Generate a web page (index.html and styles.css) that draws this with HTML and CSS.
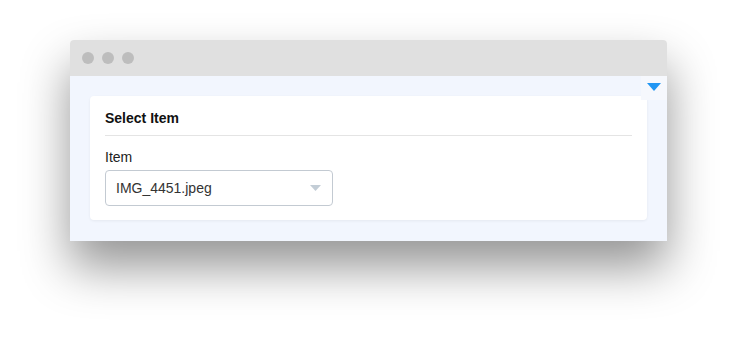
FILE: index.html
```html
<!DOCTYPE html>
<html lang="en">

<head>
  <meta charset="UTF-8">
  <meta name="viewport" content="width=device-width, initial-scale=1.0">
  <title>Select Item</title>
  <link rel="stylesheet" href="styles.css">
</head>

<body>
  <div class="browser">
    <div class="browser__bar">
      <span class="browser__dot"></span>
      <span class="browser__dot"></span>
      <span class="browser__dot"></span>
    </div>

    <div class="browser__content">
      <div class="toggle">
        <svg width="14" height="8" viewBox="0 0 14 8"><path d="M0 0 L14 0 L7 8 Z" fill="#2196f3"/></svg>
      </div>

      <div class="card">
        <div class="card__title">Select Item</div>
        <label class="field__label">Item</label>
        <div class="select">
          <span class="select__value">IMG_4451.jpeg</span>
          <svg class="select__arrow" width="11" height="6" viewBox="0 0 11 6"><path d="M0 0 L11 0 L5.5 6 Z" fill="#c3cdd6"/></svg>
        </div>
      </div>
    </div>
  </div>
</body>

</html>
```

FILE: styles.css
```css
html {
  box-sizing: border-box;
}

*,
*::before,
*::after {
  box-sizing: inherit;
}

html,
body {
  min-height: 100vh;
}

body {
  margin: 0;
  padding: 40px 0 100px 70px;
  background: #fff;
  font-family: "Liberation Sans", Arial, sans-serif;
  color: #212121;
}

.browser {
  width: 597px;
  border-radius: 4px 4px 0 0;
  box-shadow: 0 26px 48px rgba(0, 0, 0, 0.42);
  overflow: hidden;
}

.browser__bar {
  height: 36px;
  background-color: #e0e0e0;
  display: flex;
  align-items: center;
  gap: 8px;
  padding-left: 12px;
}

.browser__dot {
  width: 12px;
  height: 12px;
  border-radius: 50%;
  background-color: #bdbdbd;
}

.browser__content {
  position: relative;
  background-color: #f2f6fe;
  padding: 20px;
  height: 165px;
}

.toggle {
  position: absolute;
  top: 0;
  right: 0;
  width: 26px;
  height: 24px;
  background-color: #f6f8fd;
  display: flex;
  justify-content: center;
  padding-top: 7px;
}

.card {
  background-color: #fff;
  border-radius: 4px;
  box-shadow: 0 1px 3px rgba(0, 0, 0, 0.06);
  padding: 13px 15px 14px;
  height: 124px;
}

.card__title {
  font-size: 14px;
  font-weight: 700;
  line-height: 18px;
  color: #111;
  padding-bottom: 8px;
  border-bottom: 1px solid #e4e4e4;
}

.field__label {
  display: block;
  font-size: 14px;
  line-height: 17px;
  margin-top: 13px;
  margin-bottom: 4px;
}

.select {
  width: 228px;
  height: 36px;
  border: 1px solid #c3cad2;
  border-radius: 4px;
  display: flex;
  align-items: center;
  justify-content: space-between;
  padding: 0 11px 0 10px;
}

.select__value {
  font-size: 14px;
  color: #333;
}
```
